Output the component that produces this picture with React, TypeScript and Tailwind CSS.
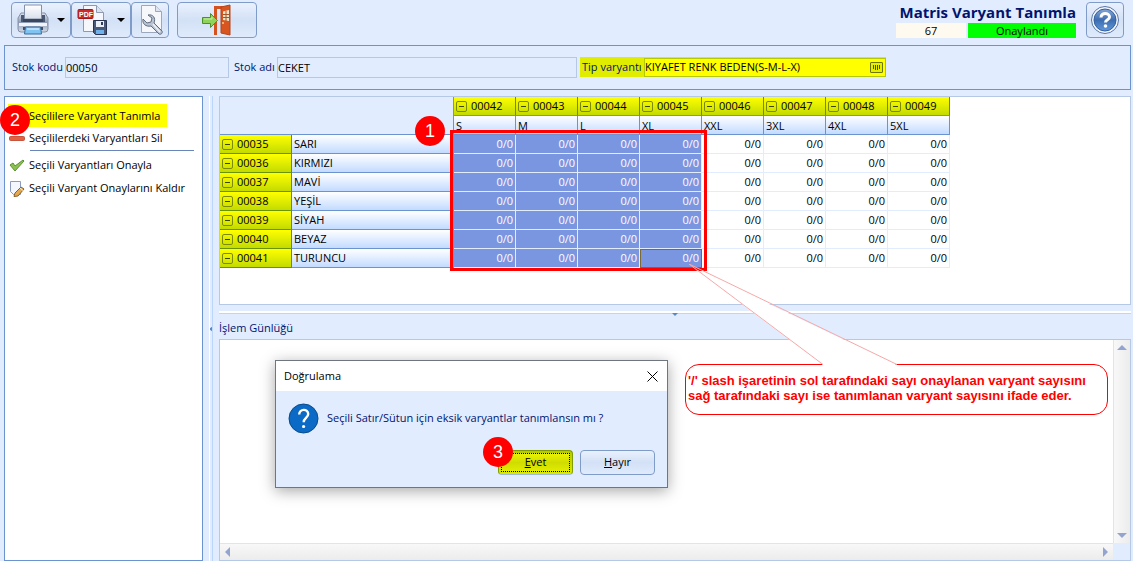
import type { ReactNode } from "react";

const columns = [
  { code: "00042", size: "S" },
  { code: "00043", size: "M" },
  { code: "00044", size: "L" },
  { code: "00045", size: "XL" },
  { code: "00046", size: "XXL" },
  { code: "00047", size: "3XL" },
  { code: "00048", size: "4XL" },
  { code: "00049", size: "5XL" },
];

const rows = [
  { code: "00035", color: "SARI" },
  { code: "00036", color: "KIRMIZI" },
  { code: "00037", color: "MAVİ" },
  { code: "00038", color: "YEŞİL" },
  { code: "00039", color: "SİYAH" },
  { code: "00040", color: "BEYAZ" },
  { code: "00041", color: "TURUNCU" },
];

const SELECTED_COLUMNS = 4;

function PrinterIcon() {
  return (
    <svg width="32" height="32" viewBox="0 0 32 32" aria-hidden="true">
      <defs>
        <linearGradient id="printerBody" x1="0" y1="0" x2="0" y2="1">
          <stop offset="0" stopColor="#dfe5ef" />
          <stop offset="0.5" stopColor="#8f9db6" />
          <stop offset="1" stopColor="#d3dae6" />
        </linearGradient>
        <linearGradient id="printerPaper" x1="0" y1="0" x2="0" y2="1">
          <stop offset="0" stopColor="#ffffff" />
          <stop offset="1" stopColor="#d9e0ec" />
        </linearGradient>
      </defs>
      <path d="M4 9h24l3 5v11a3 3 0 0 1-3 3H4a3 3 0 0 1-3-3V14z" fill="url(#printerBody)" stroke="#8490a6" />
      <path d="M4 11h3v7H4zM25 11h3v7h-3z" fill="#4b5871" />
      <path d="M7.500 1h17v14h-17z" fill="url(#printerPaper)" stroke="#8290a8" />
      <path d="M6 15h20v3H6z" fill="#3a465e" />
      <path d="M2 19h28v3H2z" fill="#f1f4f9" />
      <path d="M6 23h20v3H6z" fill="#3f4c66" />
      <path d="M8.500 23h15l1 7h-17z" fill="#7fc4f2" stroke="#3c6d9d" />
      <path d="M10 24h12v2H10z" fill="#b8defa" />
    </svg>
  );
}

function PdfSaveIcon() {
  return (
    <svg width="32" height="32" viewBox="0 0 32 32" aria-hidden="true">
      <path d="M6.500 1.500h13l7 7v19h-20z" fill="#f5f7fb" stroke="#8c99b0" />
      <path d="M19.500 1.500v7h7" fill="#dbe2ee" stroke="#8c99b0" />
      <rect x="1" y="5.500" width="15" height="9" rx="1" fill="#cf2a2a" stroke="#a51717" />
      <text x="2" y="12.500" fontSize="7" fontWeight="700" fontFamily="Liberation Sans, sans-serif" fill="#fff">PDF</text>
      <path d="M16.500 16.500h13v14h-11l-2-2z" fill="#4a5878" stroke="#263250" />
      <path d="M19 17h8v6h-8z" fill="#e9eef7" />
      <path d="M24 18h2v3h-2z" fill="#2f3c5b" />
      <path d="M19 26h8v4h-8z" fill="#6fb1ea" />
    </svg>
  );
}

function SettingsIcon() {
  return (
    <svg width="28" height="32" viewBox="0 0 28 32" aria-hidden="true">
      <path d="M5.500 1.500h14l6 6v21h-20z" fill="#f5f7fb" stroke="#9aa7bd" />
      <path d="M19.500 1.500v6h6" fill="#dde4ef" stroke="#9aa7bd" />
      <path
        d="M12 11c5-1 8 3 6 8l8 8c1 2-1 4-3 3l-8-8c-5 1-9-2-8-7l4 4 4-1 1-4z"
        fill="#b9c2d0"
        stroke="#616d80"
      />
      <path d="m17 20 7 8" stroke="#eef1f6" strokeWidth="1.500" />
    </svg>
  );
}

function ExitIcon() {
  return (
    <svg width="32" height="32" viewBox="0 0 32 32" aria-hidden="true">
      <path d="M14.500 31V3.500H22" fill="none" stroke="#d4521f" strokeWidth="3" />
      <path d="M20 3l9-2v30l-9-2z" fill="#d9551f" stroke="#b5431a" />
      <path d="M22 7.500 28 6v11l-6-1z" fill="#efe6c9" />
      <path d="M25 7v10M22 10.500h6M22 13.500h6" stroke="#a5562a" />
      <circle cx="22" cy="19" r="1" fill="#f2cf8b" />
      <path d="M1.500 13.500h8v-4l7 7-7 7v-4h-8z" fill="#8fd35a" stroke="#4c9124" />
      <path d="M3 15h8v-2" fill="none" stroke="#c9f0a4" />
    </svg>
  );
}

function HelpIcon() {
  return (
    <svg width="30" height="30" viewBox="0 0 30 30" aria-hidden="true">
      <defs>
        <linearGradient id="helpBall" x1="0" y1="0" x2="0" y2="1">
          <stop offset="0" stopColor="#86a9d6" />
          <stop offset="0.5" stopColor="#3d6db1" />
          <stop offset="1" stopColor="#5f98db" />
        </linearGradient>
      </defs>
      <circle cx="15" cy="15" r="13.500" fill="#f3f6fb" stroke="#5a76a8" />
      <circle cx="15" cy="15" r="11" fill="url(#helpBall)" stroke="#345f9f" />
      <path d="M11 12.500c0-5.500 8.500-5 8.500-.5 0 3-4 2.500-4 5.500" fill="none" stroke="#fff" strokeWidth="3" />
      <circle cx="15.500" cy="21" r="1.800" fill="#fff" />
    </svg>
  );
}

function Caret() {
  return (
    <svg width="8" height="4" viewBox="0 0 8 4" aria-hidden="true">
      <path d="M0 0h8L4 4z" fill="#000" />
    </svg>
  );
}

function ToolButton({ label, width, children }: { label: string; width: string; children: ReactNode }) {
  return (
    <button
      type="button"
      aria-label={label}
      className={`flex h-9 items-center justify-center gap-2 rounded-sm border border-[#7f9cc9] bg-linear-to-b from-[#e9f1fd] via-[#d3e1f6] to-[#dfebfc] ${width}`}
    >
      {children}
    </button>
  );
}

function CollapseButton({ code }: { code: string }) {
  return (
    <span className="flex items-center gap-1 pl-0.5">
      <button type="button" aria-label={`${code} daralt`}>
        <svg width="11" height="11" viewBox="0 0 11 11" className="block" aria-hidden="true">
          <rect x="0.5" y="0.5" width="10" height="10" rx="1.500" fill="none" stroke="#7d8a00" />
          <path d="M3 5.500h5" stroke="#3c4400" />
        </svg>
      </button>
      {code}
    </span>
  );
}

function Badge({ children, className }: { children: ReactNode; className: string }) {
  return (
    <span
      className={`absolute flex size-[30px] items-center justify-center rounded-full bg-[#fe0000] font-['Liberation_Sans',sans-serif] text-lg text-white ${className}`}
    >
      {children}
    </span>
  );
}

function Arrow({ d }: { d: string }) {
  return (
    <svg width="10" height="10" viewBox="0 0 10 10" aria-hidden="true">
      <path d={d} fill="#93a5cf" />
    </svg>
  );
}

function Toolbar() {
  return (
    <header className="flex items-start justify-between pt-0.5 pr-[9px] pl-[11px]">
      <div className="flex">
        <ToolButton label="Yazdır" width="w-[60px]">
          <PrinterIcon />
          <Caret />
        </ToolButton>
        <ToolButton label="PDF kaydet" width="w-[60px]">
          <PdfSaveIcon />
          <Caret />
        </ToolButton>
        <ToolButton label="Ayarlar" width="w-[38px]">
          <SettingsIcon />
        </ToolButton>
        <div className="pl-2">
          <ToolButton label="Çıkış" width="w-20">
            <ExitIcon />
          </ToolButton>
        </div>
      </div>
      <div className="flex gap-2.5">
        <div className="flex w-[180px] flex-col items-end">
          <h1 className="text-[15px] leading-[21px] font-bold whitespace-nowrap text-[#00146e]">Matris Varyant Tanımla</h1>
          <div className="flex w-full gap-0.5 text-center leading-[15px]">
            <span className="w-[70px] bg-[#fffaf0]">67</span>
            <span className="flex-1 bg-[#00ff00]">Onaylandı</span>
          </div>
        </div>
        <ToolButton label="Yardım" width="w-[38px]">
          <HelpIcon />
        </ToolButton>
      </div>
    </header>
  );
}

function StockForm() {
  return (
    <section className="mt-[7px] mr-0.5 ml-1 flex h-[45px] items-center border border-[#6a93d0] pb-px pl-[7px] text-[#00146e]">
      <label htmlFor="code" className="w-[53px] whitespace-nowrap">Stok kodu</label>
      <input id="code" readOnly defaultValue="00050" className="h-[21px] w-[164px] border border-[#b5c8e6] text-black" />
      <label htmlFor="name" className="w-12 pl-[5px] whitespace-nowrap">Stok adı</label>
      <input id="name" readOnly defaultValue="CEKET" className="h-[21px] w-[300px] border border-[#b5c8e6] text-black" />
      <div className="ml-[3px] flex h-5 items-center bg-[#e1ed00]">
        <label htmlFor="type" className="w-16 pl-0.5 whitespace-nowrap text-[#00146e]">Tip varyantı</label>
        <div className="flex h-[19px] w-[242px] items-center border border-[#b5c800] bg-[#ffff00] pr-0.5">
          <input id="type" defaultValue="KIYAFET RENK BEDEN(S-M-L-X)" className="min-w-0 flex-1 text-black" />
          <button type="button" aria-label="Seç">
            <svg width="13" height="11" viewBox="0 0 13 11" className="block" aria-hidden="true">
              <rect x="0.5" y="0.5" width="12" height="10" rx="0.500" fill="#e6ee00" stroke="#6b7700" />
              <path d="M3.500 3v4M5.500 3v5M7.500 3v5M9.500 3v4" stroke="#4a5200" />
            </svg>
          </button>
        </div>
      </div>
    </section>
  );
}

function Sidebar() {
  return (
    <nav className="flex w-[199px] shrink-0 flex-col border border-[#6a93d0] bg-white pt-[7px] pl-[3px]">
      <button type="button" className="flex h-[23px] w-[159px] items-center bg-[#ffff00] pt-0.5 pl-[21px] whitespace-nowrap">
        Seçililere Varyant Tanımla
      </button>
      <button type="button" className="flex h-[23px] items-center gap-1 pl-px whitespace-nowrap">
        <svg width="16" height="16" viewBox="0 0 16 16" aria-hidden="true">
          <rect x="0.5" y="5.500" width="15" height="4" rx="1" fill="#e5603e" stroke="#c4553f" />
        </svg>
        Seçililerdeki Varyantları Sil
      </button>
      <hr className="mr-2 ml-[22px] border-[#6a85b8]" />
      <button type="button" className="mt-0.5 flex h-6 items-center gap-1 pl-px whitespace-nowrap">
        <svg width="16" height="16" viewBox="0 0 16 16" aria-hidden="true">
          <path d="m1 8 3-2 2 3 8-6 1 1-9 10z" fill="#8cc152" stroke="#5b9330" />
        </svg>
        Seçili Varyantları Onayla
      </button>
      <button type="button" className="flex h-[23px] items-center gap-1 pl-px whitespace-nowrap">
        <svg width="16" height="16" viewBox="0 0 16 16" aria-hidden="true">
          <path d="M1.500.5h10v13h-7l-3-3z" fill="#f4f7fd" stroke="#8c9cbe" />
          <path d="m6 12 6-6 3 2-6 7-4 .5z" fill="#e5a94f" stroke="#8a6128" />
          <path d="m11 7 3 2.500" stroke="#fff2cf" />
        </svg>
        Seçili Varyant Onaylarını Kaldır
      </button>
    </nav>
  );
}

function VariantTable() {
  return (
    <table className="w-[730px] table-fixed border-separate border-spacing-0 leading-4">
      <colgroup>
        <col className="w-[72px]" />
        <col className="w-[162px]" />
        {columns.map((c) => (
          <col key={c.code} className="w-[62px]" />
        ))}
      </colgroup>
      <thead>
        <tr className="h-[19px]">
          <td colSpan={2} rowSpan={2} className="border-r border-b border-[#6a93d0] bg-[#e1edff]" />
          {columns.map((c) => (
            <th key={c.code} className="border-r border-b border-r-[#6a9300] border-b-[#6a93d0] bg-linear-to-b from-[#ffff00] to-[#c3db00] p-0 font-normal">
              <CollapseButton code={c.code} />
            </th>
          ))}
        </tr>
        <tr className="h-[19px]">
          {columns.map((c) => (
            <th key={c.code} className="border-r border-b border-[#6a93d0] bg-linear-to-b from-white to-[#c3dbff] p-0 pt-px pl-0.5 text-left font-normal">
              {c.size}
            </th>
          ))}
        </tr>
      </thead>
      <tbody>
        {rows.map((r, y) => (
          <tr key={r.code} className="h-[19px]">
            <th className="border-r border-b border-[#6a9300] bg-linear-to-b from-[#ffff00] to-[#c3db00] p-0 font-normal">
              <CollapseButton code={r.code} />
            </th>
            <th className="border-r border-b border-[#6a93d0] bg-linear-to-b from-white to-[#c3dbff] p-0 pl-0.5 text-left font-normal">
              {r.color}
            </th>
            {columns.map((c, x) => {
              const selected = x < SELECTED_COLUMNS;
              const focused = x === SELECTED_COLUMNS - 1 && y === rows.length - 1;
              return (
                <td
                  key={c.code}
                  className={`border-r border-b border-[#e1edff] p-0 pr-0.5 text-right ${selected ? "bg-[#7b96e0] text-white" : ""} ${focused ? "outline -outline-offset-1 outline-[#7d6a2c]" : ""}`}
                >
                  0/0
                </td>
              );
            })}
          </tr>
        ))}
      </tbody>
    </table>
  );
}

function LogPanel() {
  return (
    <div className="flex min-h-0 flex-1 flex-col border border-[#b5c8e6] bg-white">
      <div className="flex min-h-0 flex-1">
        <textarea aria-labelledby="log-title" readOnly className="min-w-0 flex-1 resize-none" />
        <div className="flex w-[17px] flex-col items-center justify-between border-l border-[#e4e4e4] bg-linear-to-r from-[#f8f8f8] to-[#ececec] py-[3px]">
          <Arrow d="M0 7h10L5 2z" />
          <Arrow d="M0 3h10L5 8z" />
        </div>
      </div>
      <div className="flex h-[17px]">
        <div className="flex flex-1 items-center justify-between border-t border-[#e4e4e4] bg-linear-to-b from-[#f8f8f8] to-[#ececec] px-[3px]">
          <Arrow d="M7 0v10L2 5z" />
          <Arrow d="M3 0v10l5-5z" />
        </div>
        <div className="w-[17px] bg-[#e1edff]" />
      </div>
    </div>
  );
}

function ConfirmDialog() {
  return (
    <div
      role="dialog"
      aria-labelledby="dialog-title"
      className="absolute top-[360px] left-[275px] w-[393px] border border-[#707680] bg-[#e1edff] shadow-[0_3px_14px_rgba(0,0,0,0.35)]"
    >
      <div className="flex h-[30px] items-center justify-between bg-white pr-[9px] pl-2">
        <h2 id="dialog-title">Doğrulama</h2>
        <button type="button" aria-label="Kapat">
          <svg width="11" height="11" viewBox="0 0 11 11" className="block" aria-hidden="true">
            <path d="m.5.5 10 10M10.500.5l-10 10" stroke="#000" />
          </svg>
        </button>
      </div>
      <div className="flex items-center gap-2 pt-3 pl-3 text-[#00146e]">
        <svg width="31" height="31" viewBox="0 0 31 31" aria-hidden="true">
          <circle cx="15.500" cy="15.500" r="14.500" fill="#0b6ac6" stroke="#0a4a87" />
          <path d="M11.200 11.500c0-6 9-6 9-.6 0 4-4.500 4-4.500 8.300" fill="none" stroke="#fff" strokeWidth="2.400" />
          <circle cx="15.600" cy="23.500" r="1.600" fill="#fff" />
        </svg>
        <p className="whitespace-nowrap">Seçili Satır/Sütun için eksik varyantlar tanımlansın mı ?</p>
      </div>
      <div className="flex justify-end gap-[7px] pt-4 pr-3 pb-3">
        <button type="button" className="h-[25px] w-[75px] rounded-sm border border-[#7f9c00] border-b-[#9db9dc] bg-linear-to-b from-[#b6c800] to-[#dcea00] p-0.5">
          <span className="flex h-full items-center justify-center border border-dotted border-black bg-linear-to-b from-[#e9f200] via-[#d0dc00] to-[#e0ec00]">
            <u>E</u>vet
          </span>
        </button>
        <button type="button" className="h-[25px] w-[75px] rounded-sm border border-[#7f9cc9] bg-linear-to-b from-[#e9f1fd] via-[#d3e1f6] to-[#dfebfc]">
          <u>H</u>ayır
        </button>
      </div>
    </div>
  );
}

function Callout() {
  return (
    <>
      <p className="absolute top-[364px] left-[685px] h-[51px] w-[423px] rounded-[14px] border border-[#fe0000] bg-white pt-2 pl-0.5 font-['Liberation_Sans',sans-serif] text-[13px] leading-[15px] font-bold whitespace-nowrap text-[#fe0000]">
        '/' slash işaretinin sol tarafındaki sayı onaylanan varyant sayısını
        <br />
        sağ tarafındaki sayı ise tanımlanan varyant sayısını ifade eder.
      </p>
      <svg width="210" height="102" viewBox="0 0 210 102" className="pointer-events-none absolute top-[264px] left-[688px]" aria-hidden="true">
        <path d="M7 5 135 101h74z" fill="#fff" />
        <path d="M135 100.500 1 0l208 100.500" fill="none" stroke="#f7a8a8" />
      </svg>
    </>
  );
}

export default function App() {
  return (
    <main className="relative flex h-screen flex-col overflow-hidden bg-[#e1edff] font-['Open_Sans','Noto_Sans',sans-serif] text-[11px] text-black">
      <Toolbar />
      <StockForm />
      <div className="mt-1.5 flex min-h-0 flex-1 pr-0.5 pl-1">
        <Sidebar />
        <div className="flex w-4 shrink-0 items-center">
          <svg width="4" height="6" viewBox="0 0 4 6" className="ml-1.5" aria-hidden="true">
            <path d="M4 0v6L0 3z" fill="#5b86c4" />
          </svg>
          <div className="-ml-1 h-full w-1 border-x border-l-white border-r-[#bcd6fb]" />
        </div>
        <div className="flex min-w-0 flex-1 flex-col">
          <div className="h-[209px] border border-[#b5c8e6] bg-white">
            <VariantTable />
          </div>
          <div className="flex h-[15px] items-center">
            <div className="flex h-[3px] w-full justify-center border-t-2 border-b border-t-white border-b-[#bcd6fb]">
              <svg width="6" height="3" viewBox="0 0 6 3" className="shrink-0" aria-hidden="true">
                <path d="M0 0h6L3 3z" fill="#5b86c4" />
              </svg>
            </div>
          </div>
          <h2 id="log-title" className="h-[19px] leading-4 text-[#00146e]">İşlem Günlüğü</h2>
          <LogPanel />
        </div>
      </div>

      <div className="pointer-events-none absolute top-[130px] left-[450px] h-[141px] w-[257px] border-3 border-[#fe0000]" />
      <Badge className="top-[116px] left-[415px]">1</Badge>
      <Badge className="top-[105px] left-0">2</Badge>
      <Callout />
      <ConfirmDialog />
      <Badge className="top-[437px] left-[483px]">3</Badge>
    </main>
  );
}
